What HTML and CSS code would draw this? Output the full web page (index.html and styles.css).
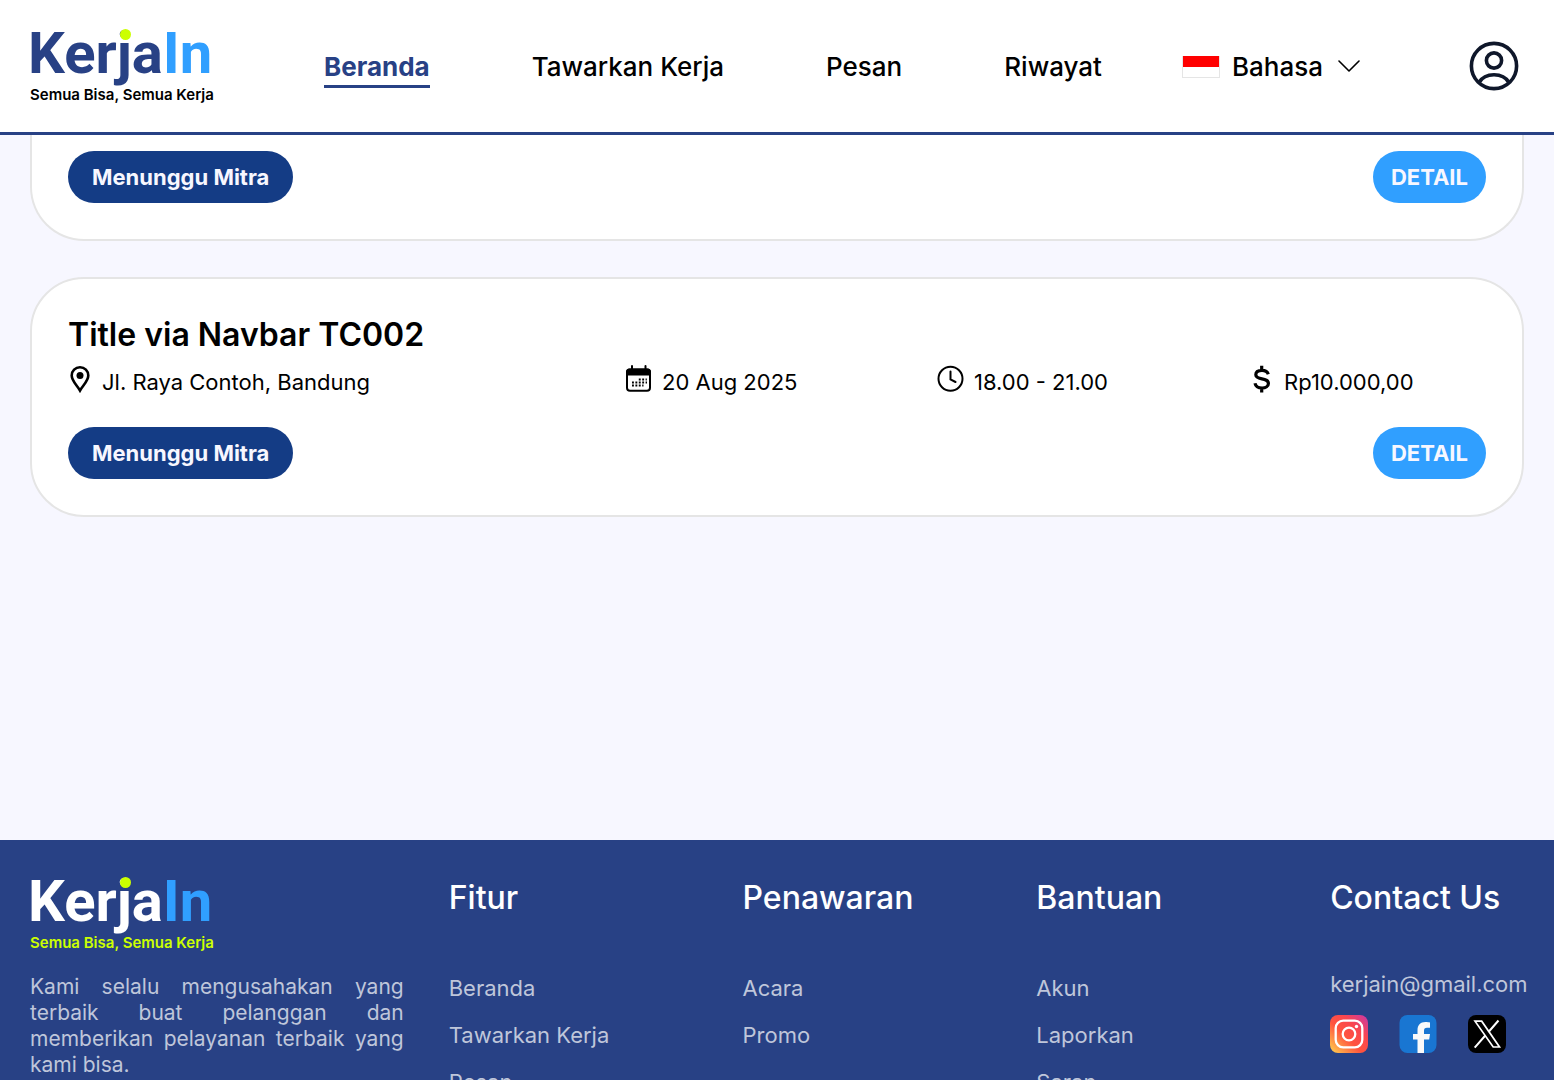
FILE: index.html
```html
<!DOCTYPE html>
<html lang="id">
<head>
<meta charset="utf-8">
<meta name="viewport" content="width=device-width, initial-scale=1">
<title>KerjaIn</title>
<link rel="stylesheet" href="styles.css">
</head>
<body>
<header class="header">
  <a class="logo" href="#">
    <span class="logo-name">Ker<span class="logo-j">j</span>a<span class="logo-in">In</span></span>
    <span class="logo-tag">Semua Bisa, Semua Kerja</span>
  </a>
  <nav class="nav">
    <div class="nav-links">
      <a class="nav-link active" href="#">Beranda</a>
      <a class="nav-link" href="#">Tawarkan Kerja</a>
      <a class="nav-link" href="#">Pesan</a>
      <a class="nav-link" href="#">Riwayat</a>
    </div>
    <button class="language" type="button">
      <span class="flag"></span>
      Bahasa
      <svg class="chevron" width="22" height="14" viewBox="0 0 22 14" fill="none" stroke="#000" stroke-width="1.6" stroke-linecap="round" stroke-linejoin="round"><path d="M1 1l10 10L21 1"/></svg>
    </button>
  </nav>
  <button class="profile" type="button" aria-label="Profil">
    <svg width="60" height="60" viewBox="0 0 60 60" fill="none" stroke="#0f172a" stroke-width="3.6"><circle cx="30" cy="30" r="22.6"/><circle cx="30" cy="24.5" r="7.6"/><path d="M15 46.500C18 41.500 23.500 38.800 30 38.800S42 41.500 45 46.500"/></svg>
  </button>
</header>

<main class="main">
  <article class="card card-continued">
    <div class="card-actions">
      <span class="status">Menunggu Mitra</span>
      <button class="detail" type="button">DETAIL</button>
    </div>
  </article>

  <article class="card">
    <h2 class="card-title">Title via Navbar TC002</h2>
    <ul class="meta">
      <li><svg width="24" height="28" viewBox="0 0 24 28"><path d="M12 2.200a8.300 8.300 0 0 0-8.300 8.400c0 5.500 5.300 9.700 8.300 15 3-5.300 8.300-9.500 8.300-15A8.300 8.300 0 0 0 12 2.200z" fill="none" stroke="#000" stroke-width="2.600"/><circle cx="12" cy="10.500" r="3.500"/></svg>Jl. Raya Contoh, Bandung</li>
      <li><svg width="27" height="28" viewBox="0 0 27 28"><rect x="2" y="4.500" width="23" height="21.300" rx="3" fill="none" stroke="#000" stroke-width="2"/><path d="M1 7a3.500 3.500 0 0 1 3.500-3.500h18A3.500 3.500 0 0 1 26 7v3.500H1z"/><path d="M7 1v4M20.500 1v4" stroke="#000" stroke-width="2" stroke-linecap="round"/><path d="M13.800 14.500h8M7 17.500h15M7 20.500h11.500" stroke="#000" stroke-width="1.900" stroke-dasharray="1.900 1.500"/></svg>20 Aug 2025</li>
      <li><svg width="27" height="28" viewBox="0 0 27 28" fill="none" stroke="#000" stroke-width="2"><circle cx="13.500" cy="13.700" r="12"/><path d="M13.500 6.500v7.800l5 2.700" stroke-linecap="round"/></svg>18.00 - 21.00</li>
      <li><svg width="22" height="28" viewBox="0 0 22 28" fill="none" stroke="#000" stroke-width="3.200"><path d="M16.300 9.300C15.500 6.800 13.500 5.300 10 5.300c-3.800 0-6.200 1.700-6.200 4.400 0 6.200 12.600 2 12.600 8.700 0 2.900-2.700 4.600-6.300 4.600-4 0-6.500-1.700-7.100-4.800M9.700 .7V5.500M9.700 23v4.500"/></svg>Rp10.000,00</li>
    </ul>
    <div class="card-actions">
      <span class="status">Menunggu Mitra</span>
      <button class="detail" type="button">DETAIL</button>
    </div>
  </article>
</main>

<footer class="footer">
  <section>
    <a class="logo logo-light" href="#">
      <span class="logo-name">Ker<span class="logo-j">j</span>a<span class="logo-in">In</span></span>
      <span class="logo-tag">Semua Bisa, Semua Kerja</span>
    </a>
    <p class="about">Kami selalu mengusahakan yang terbaik buat pelanggan dan memberikan pelayanan terbaik yang kami bisa.</p>
  </section>
  <section>
    <h3 class="footer-title">Fitur</h3>
    <ul class="footer-links"><li><a href="#">Beranda</a></li><li><a href="#">Tawarkan Kerja</a></li><li><a href="#">Pesan</a></li></ul>
  </section>
  <section>
    <h3 class="footer-title">Penawaran</h3>
    <ul class="footer-links"><li><a href="#">Acara</a></li><li><a href="#">Promo</a></li></ul>
  </section>
  <section>
    <h3 class="footer-title">Bantuan</h3>
    <ul class="footer-links"><li><a href="#">Akun</a></li><li><a href="#">Laporkan</a></li><li><a href="#">Saran</a></li></ul>
  </section>
  <section>
    <h3 class="footer-title">Contact Us</h3>
    <a class="email" href="mailto:kerjain@gmail.com">kerjain@gmail.com</a>
    <div class="social">
      <a href="#" aria-label="Instagram"><svg width="38" height="38" viewBox="0 0 38 38"><defs><linearGradient id="ig" x1="0" y1="1" x2="1" y2="0"><stop offset="0" stop-color="#ffd54f"/><stop offset=".42" stop-color="#ff543e"/><stop offset=".68" stop-color="#f9464f"/><stop offset="1" stop-color="#c837ab"/></linearGradient></defs><rect width="38" height="38" rx="8" fill="url(#ig)"/><g fill="none" stroke="#fff" stroke-width="2.300"><rect x="5.700" y="5.700" width="26.600" height="26.600" rx="7.500"/><circle cx="19" cy="19" r="6.300"/></g><circle cx="26.500" cy="11.500" r="1.700" fill="#fff"/></svg></a>
      <a href="#" aria-label="Facebook"><svg width="38" height="38" viewBox="0 0 38 38"><rect x=".5" width="37" height="38" rx="8" fill="#1976d2"/><path d="M18.500 38V24.500H14V19h4.500v-3.500c0-5.500 2.700-8.500 8-8.500 2 0 3.300.2 4.500.5v5.300h-3c-2.200 0-3 1-3 3V19h6l-.8 5.500H25V38z" fill="#fafafa"/></svg></a>
      <a href="#" aria-label="X"><svg width="38" height="38" viewBox="0 0 38 38"><rect width="38" height="38" rx="8"/><path d="M7 6.200h6.700L31.500 32h-6.300z" fill="none" stroke="#fff" stroke-width="1.700"/><path d="M30.500 5.500L20.500 17M17.300 20.500L6.700 32.700" stroke="#fff" stroke-width="2"/></svg></a>
    </div>
  </section>
</footer>
</body>
</html>
```
FILE: styles.css
```css
* { box-sizing: border-box; }

body {
  display: flex;
  flex-direction: column;
  height: 100vh;
  margin: 0;
  overflow: hidden;
  background: #f7f7ff;
  color: #000;
  font-family: Inter, "Liberation Sans", sans-serif;
  font-size: 22px;
  line-height: 26px;
}

a { color: inherit; text-decoration: none; }
button { padding: 0; border: 0; background: none; color: inherit; font: inherit; cursor: pointer; }
ul { margin: 0; padding: 0; list-style: none; }
h2, h3, p { margin: 0; }
svg { display: block; flex: none; }

.header {
  display: flex;
  flex: none;
  align-items: center;
  height: 135px;
  padding: 0 30px;
  border-bottom: 3px solid #284185;
  background: #fff;
}

.logo { display: block; width: 181px; color: #284185; }
.logo-name {
  display: block;
  margin-left: -2px;
  font: 700 58px/50px Roboto, sans-serif;
  white-space: nowrap;
}
.logo-j { position: relative; }
.logo-j::after {
  content: "";
  position: absolute;
  top: 10px;
  right: 1px;
  width: 11px;
  height: 11px;
  border-radius: 50%;
  background: #cf0;
}
.logo-in { color: #309fff; }
.logo-tag {
  display: block;
  padding-top: 8px;
  color: #000;
  font-size: 15px;
  font-weight: 600;
  line-height: 18px;
  white-space: nowrap;
}
.logo-light { color: #fff; }
.logo-light .logo-tag { color: #cf0; }

.nav {
  display: flex;
  flex: 1;
  align-items: center;
  justify-content: space-between;
  margin: 0 104px 0 113px;
  padding-top: 2px;
  font-size: 26px;
  font-weight: 500;
  line-height: 36px;
}
.nav-links { display: flex; gap: 102px; padding-top: 3px; }
.nav-link { border-bottom: 3px solid transparent; white-space: nowrap; }
.nav-link.active { border-color: #284185; color: #284185; font-weight: 700; }

.language { display: flex; align-items: center; gap: 12px; }
.flag {
  width: 38px;
  height: 22px;
  border: 1px solid #e5e5e5;
  border-width: 0 1px 1px;
  background: linear-gradient(#f00 50%, #fff 50%);
}
.chevron { margin-left: 3px; }
.profile { flex: none; }

.main {
  display: flex;
  flex: 1;
  flex-direction: column;
  gap: 36px;
  padding: 0 30px;
}

.card {
  padding: 36px;
  border: 2px solid #e5e5e5;
  border-radius: 54px;
  background: #fff;
}
.card-continued {
  padding-top: 16px;
  border-top: 0;
  border-radius: 0 0 54px 54px;
}
.card-title { font-size: 32px; font-weight: 600; line-height: 40px; }

.meta {
  display: grid;
  grid-template-columns: 557fr 312fr 315fr 234fr;
  margin: 10px 0 27px;
}
.meta li { display: flex; gap: 10px; line-height: 35px; white-space: nowrap; }

.card-actions { display: flex; justify-content: space-between; }
.status, .detail {
  border-radius: 26px;
  color: #f7f7ff;
  font-weight: 700;
  line-height: 52px;
}
.status { padding: 0 24px; background: #143c85; }
.detail { padding: 0 18px; background: #309fff; }

.footer {
  display: grid;
  flex: 0 0 240px;
  grid-template-columns: 374fr 249fr 249fr 249fr minmax(0, 194fr);
  column-gap: 45px;
  min-height: 0;
  padding: 36px 30px 0;
  background: #284185;
  color: #bfc6da;
}
.about { margin-top: 22px; font-size: 21px; text-align: justify; }
.footer-title { color: #fff; font-size: 32px; font-weight: 500; line-height: 44px; }
.footer-links { display: grid; gap: 21px; margin-top: 55px; }
.email { display: block; margin-top: 51px; }
.social { display: flex; gap: 31px; margin-top: 18px; }
```
